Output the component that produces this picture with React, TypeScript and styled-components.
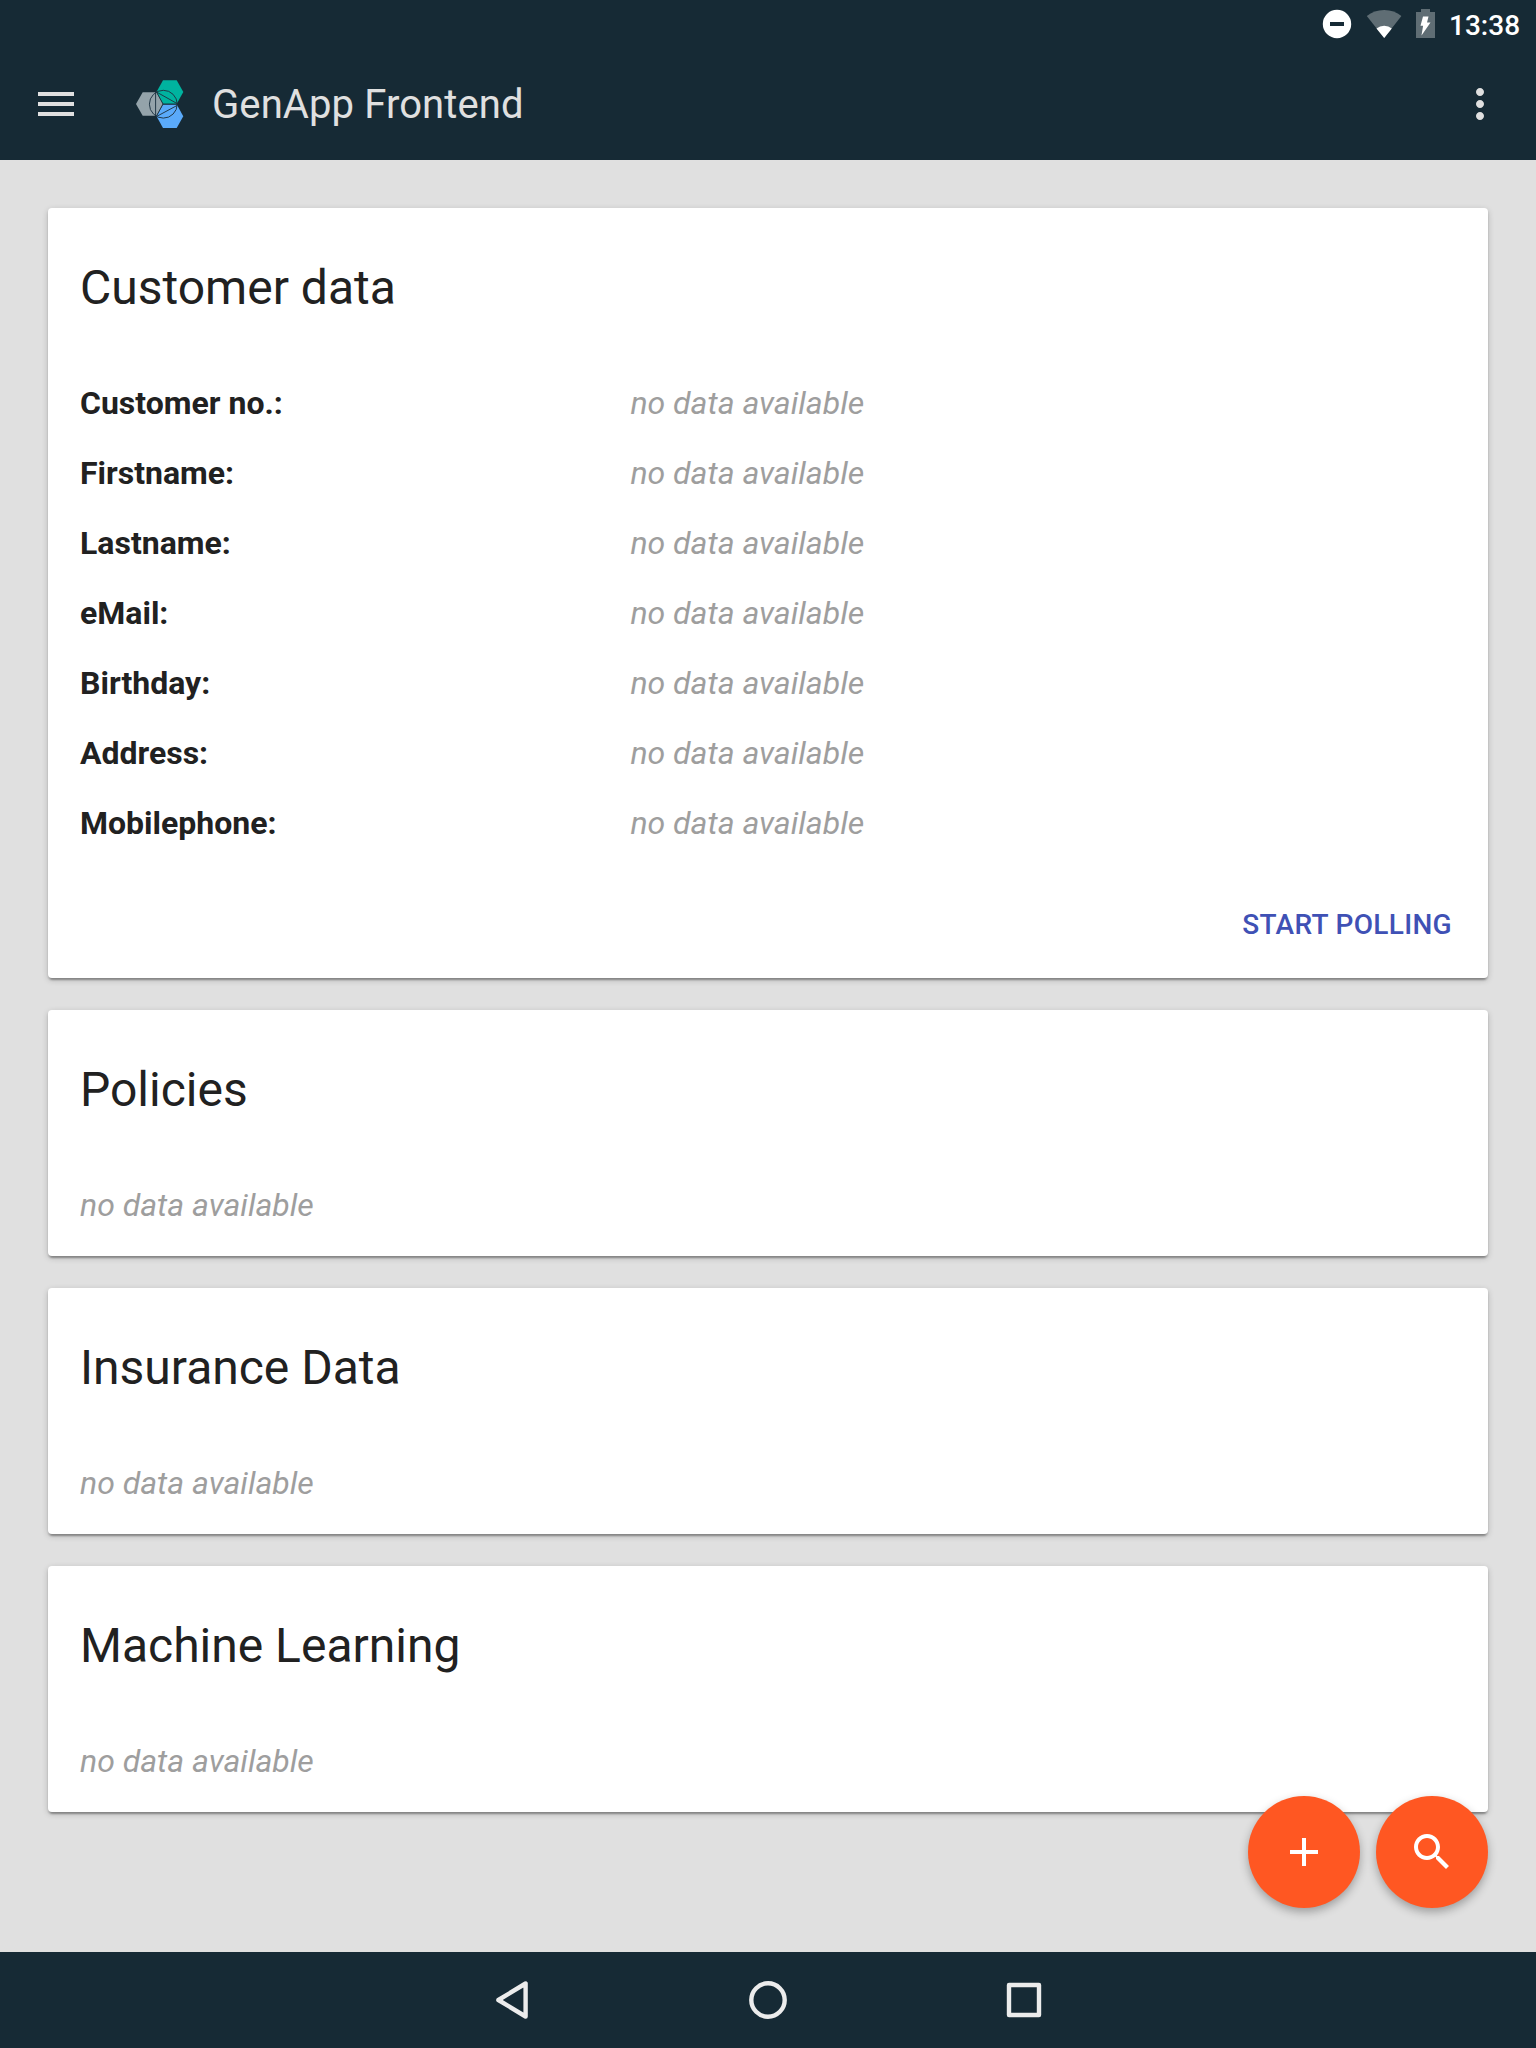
import React from "react";
import styled, { createGlobalStyle } from "styled-components";

const GlobalStyle = createGlobalStyle`
  * { box-sizing: border-box; }
  html, body { margin: 0; padding: 0; }
  body { font-family: Roboto, sans-serif; background: #e0e0e0; color: #212121; }
`;

const Screen = styled.div`
  display: flex;
  flex-direction: column;
  width: 1536px;
  height: 2048px;
  background: #e0e0e0;
`;

const StatusBar = styled.div`
  display: flex;
  align-items: center;
  justify-content: flex-end;
  gap: 11px;
  height: 48px;
  padding-right: 15px;
  background: #162a35;
`;

const StatusIcons = styled.svg`
  display: block;
  width: 120px;
  height: 48px;
`;

const Clock = styled.span`
  width: 72px;
  padding-top: 4px;
  font-size: 28px;
  font-weight: 500;
  line-height: 48px;
  white-space: nowrap;
  color: #fff;
`;

const Toolbar = styled.header`
  display: flex;
  align-items: center;
  height: 112px;
  padding: 0 32px;
  background: #162a35;
  color: #e0e0e0;
`;

const IconButton = styled.button`
  display: flex;
  padding: 0;
  border: 0;
  background: none;
  color: inherit;
`;

const Logo = styled.svg`
  width: 48px;
  height: 48px;
  margin-left: 56px;
`;

const AppTitle = styled.h1`
  flex: 1;
  margin: 0 0 0 28px;
  padding-top: 2px;
  font-size: 40px;
  font-weight: 400;
  line-height: 48px;
  letter-spacing: 0.1px;
`;

const Content = styled.main`
  flex: 1;
  display: flex;
  flex-direction: column;
  gap: 32px;
  padding: 48px 48px 0;
`;

const Card = styled.section`
  display: flex;
  flex-direction: column;
  padding: 48px 32px 16px;
  border-radius: 4px;
  background: #fff;
  box-shadow: 0 4px 2px -2px rgba(0, 0, 0, 0.2), 0 2px 2px rgba(0, 0, 0, 0.14),
    0 2px 6px rgba(0, 0, 0, 0.2);
`;

const CardTitle = styled.h2`
  margin: 0 0 48px;
  font-size: 48px;
  font-weight: 400;
  line-height: 64px;
`;

const Row = styled.div`
  display: flex;
  align-items: center;
  height: 70px;
  font-size: 32px;
`;

const Label = styled.span`
  width: 40%;
  font-weight: 700;
`;

const Empty = styled.span`
  font-style: italic;
  color: #9e9e9e;
`;

const Actions = styled.div`
  display: flex;
  justify-content: flex-end;
  padding: 35px 4px 5px 0;
`;

const TextButton = styled.button`
  height: 64px;
  padding: 0;
  border: 0;
  background: none;
  font: 500 28px/64px Roboto, sans-serif;
  letter-spacing: 0.32px;
  color: #3f51b5;
  text-transform: uppercase;
`;

const FabGroup = styled.div`
  position: fixed;
  left: 1248px;
  top: 1796px;
  display: flex;
  gap: 16px;
`;

const Fab = styled.button`
  display: flex;
  align-items: center;
  justify-content: center;
  width: 112px;
  height: 112px;
  padding: 0;
  border: 0;
  border-radius: 50%;
  background: #ff5722;
  color: #fff;
  box-shadow: 0 4px 10px rgba(0, 0, 0, 0.3);
`;

const NavBar = styled.nav`
  display: flex;
  align-items: center;
  justify-content: center;
  gap: 208px;
  height: 96px;
  background: #162a35;
`;

const NavIcon = styled.svg`
  width: 48px;
  height: 48px;
  fill: none;
  stroke: #ececec;
  stroke-width: 4.4;
  stroke-linejoin: round;
`;

const customerFields = ["Customer no.", "Firstname", "Lastname", "eMail", "Birthday", "Address", "Mobilephone"];
const otherCards = ["Policies", "Insurance Data", "Machine Learning"];

const NoData = () => <Empty>no data available</Empty>;

export default function App() {
  return (
    <Screen>
      <GlobalStyle />
      <StatusBar>
        <StatusIcons viewBox="1318 0 120 48">
          <circle cx="1337" cy="24" r="14.2" fill="#fff" />
          <rect x="1330" y="22" width="14" height="4" fill="#162a35" />
          <path d="M1384.2 38 L1366.8 16 Q1374 10 1384.2 10 Q1394.400 10 1401.400 16 Z" fill="#5f6d74" />
          <path d="M1384.2 38 L1376.500 28.400 Q1379.800 25.800 1384.2 25.800 Q1388.600 25.800 1391.800 28.400 Z" fill="#fff" />
          <path d="M1421 9 h9 v3 h5 v26 h-19 v-26 h5 Z" fill="#5f6d74" />
          <path d="M1423 16.500 h5.500 l-1.500 6 h3.500 l-9 13 l1.600 -9.700 h-2.600 Z" fill="#fff" />
        </StatusIcons>
        <Clock>13:38</Clock>
      </StatusBar>
      <Toolbar>
        <IconButton aria-label="Menu">
          <svg width="48" height="48" viewBox="0 0 24 24" fill="currentColor">
            <path d="M3 18h18v-2H3v2zm0-5h18v-2H3v2zm0-7v2h18V6H3z" />
          </svg>
        </IconButton>
        <Logo viewBox="136 80 48 48">
          <path d="M136 104 L142.700 92.200 H156.500 L163 104 L156.500 115.800 H142.700 Z" fill="#94a3aa" />
          <path d="M156.500 92 L163 80.200 H176.700 L183.300 92 L176.700 103.800 H163 Z" fill="#00b39f" />
          <path d="M156.500 116.200 L163 104.400 H176.700 L183.300 116.200 L176.700 128 H163 Z" fill="#5aaafa" />
          <g fill="none" stroke="#1d3442" strokeWidth="0.950">
            <circle cx="163.300" cy="104.200" r="13.900" />
            <path d="M155.600 92 V116 M156.500 92 L177 103.500 M156.500 116.500 L177 105.500 M156.500 92 L163 104 L156.500 116 M163 104.200 H177" />
          </g>
        </Logo>
        <AppTitle>GenApp Frontend</AppTitle>
        <IconButton aria-label="More">
          <svg width="48" height="48" viewBox="0 0 24 24" fill="currentColor">
            <path d="M12 8c1.100 0 2-.9 2-2s-.9-2-2-2-2 .9-2 2 .9 2 2 2zm0 2c-1.100 0-2 .9-2 2s.9 2 2 2 2-.9 2-2-.9-2-2-2zm0 6c-1.100 0-2 .9-2 2s.9 2 2 2 2-.9 2-2-.9-2-2-2z" />
          </svg>
        </IconButton>
      </Toolbar>
      <Content>
        <Card>
          <CardTitle>Customer data</CardTitle>
          {customerFields.map((field) => (
            <Row key={field}>
              <Label>{field}:</Label>
              <NoData />
            </Row>
          ))}
          <Actions>
            <TextButton>Start polling</TextButton>
          </Actions>
        </Card>
        {otherCards.map((title) => (
          <Card key={title}>
            <CardTitle>{title}</CardTitle>
            <Row>
              <NoData />
            </Row>
          </Card>
        ))}
      </Content>
      <NavBar>
        <NavIcon viewBox="488 1976 48 48">
          <path d="M498.400 2000 L525.600 1983.500 V2016.500 Z" />
        </NavIcon>
        <NavIcon viewBox="744 1976 48 48">
          <circle cx="768" cy="2000" r="16.700" />
        </NavIcon>
        <NavIcon viewBox="1000 1976 48 48">
          <rect x="1009" y="1985" width="30" height="30" />
        </NavIcon>
      </NavBar>
      <FabGroup>
        <Fab aria-label="Add">
          <svg width="48" height="48" viewBox="0 0 24 24" fill="currentColor">
            <path d="M19 13h-6v6h-2v-6H5v-2h6V5h2v6h6v2z" />
          </svg>
        </Fab>
        <Fab aria-label="Search">
          <svg width="48" height="48" viewBox="0 0 24 24" fill="currentColor">
            <path d="M15.500 14h-.79l-.28-.27C15.410 12.590 16 11.110 16 9.500 16 5.910 13.090 3 9.500 3S3 5.910 3 9.500 5.910 16 9.500 16c1.610 0 3.090-.59 4.230-1.570l.27.28v.79l5 4.990L20.490 19l-4.990-5zm-6 0C7.010 14 5 11.990 5 9.500S7.010 5 9.500 5 14 7.010 14 9.500 11.990 14 9.500 14z" />
          </svg>
        </Fab>
      </FabGroup>
    </Screen>
  );
}
